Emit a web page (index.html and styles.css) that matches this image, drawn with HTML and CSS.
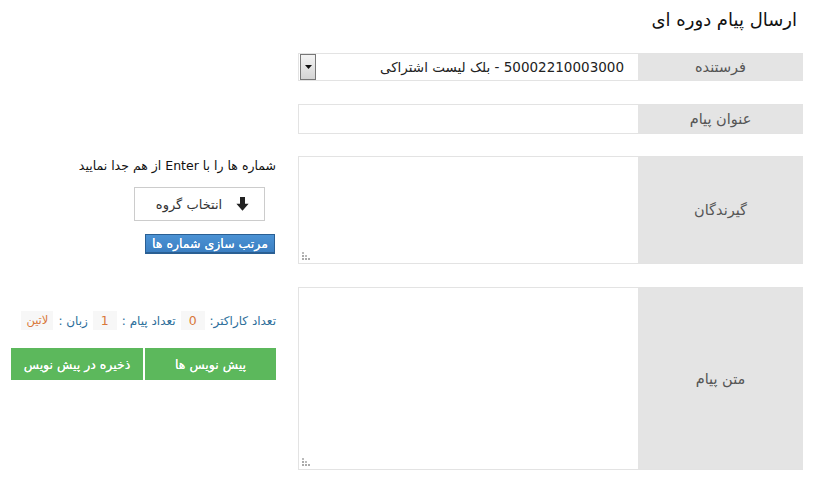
FILE: index.html
```html
<!DOCTYPE html>
<html lang="fa" dir="rtl">
<head>
<meta charset="utf-8">
<title>ارسال پیام دوره ای</title>
<link rel="stylesheet" href="styles.css">
</head>
<body>
<h1 class="title">ارسال پیام دوره ای</h1>
<div class="grid">
  <div class="field f-sender">
    <div class="label">فرستنده</div>
    <div class="control select-wrap">
      <div class="select-value">50002210003000 - بلک لیست اشتراکی</div>
      <span class="select-arrow"><svg width="7" height="4" viewBox="0 0 7 4"><path d="M0 0h7L3.5 4z" fill="#111"/></svg></span>
    </div>
  </div>
  <div class="side"></div>

  <div class="field f-subject">
    <div class="label">عنوان پیام</div>
    <input class="control input" type="text">
  </div>
  <div class="side"></div>

  <div class="field f-recv grip">
    <div class="label">گیرندگان</div>
    <textarea class="control area"></textarea>
  </div>
  <div class="side side-recv">
    <div class="hint">شماره ها را با Enter از هم جدا نمایید</div>
    <button class="btn-group" type="button">
      <svg width="13" height="14" viewBox="0 0 13 14"><path d="M4 0h5v6.8h3.6L6.5 13.8 0.4 6.8h3.6z" fill="#222"/></svg>
      <span>انتخاب گروه</span>
    </button>
    <button class="btn-sort" type="button">مرتب سازی شماره ها</button>
  </div>

  <div class="field f-text grip">
    <div class="label">متن پیام</div>
    <textarea class="control area"></textarea>
  </div>
  <div class="side side-text">
    <div class="counters">
      <span class="c-label">تعداد کاراکتر:</span>
      <span class="c-val">0</span>
      <span class="c-label">تعداد پیام :</span>
      <span class="c-val">1</span>
      <span class="c-label">زبان :</span>
      <span class="c-val c-lang">لاتین</span>
    </div>
    <div class="green-row">
      <button class="btn-green" type="button">پیش نویس ها</button>
      <button class="btn-green" type="button">ذخیره در پیش نویس</button>
    </div>
  </div>
</div>
</body>
</html>
```
FILE: styles.css
```css
* { box-sizing: border-box; }
html, body { margin: 0; padding: 0; background: #fff; }
body {
  width: 815px;
  height: 482px;
  overflow: hidden;
  font-family: "DejaVu Sans", Tahoma, sans-serif;
  font-size: 12px;
  color: #222;
  direction: rtl;
}
.title {
  margin: 0;
  padding: 8px 18px 0 0;
  font-size: 18px;
  font-weight: normal;
  line-height: 24px;
  color: #111;
}
.grid {
  display: grid;
  grid-template-columns: 505px 265px;
  column-gap: 22px;
  padding: 21px 12px 0 0;
}
.field {
  position: relative;
  display: flex;
  border: 1px solid #e3e3e3;
  border-right: none;
}
.f-sender { height: 28px; margin-bottom: 23px; }
.f-subject { height: 30px; margin-bottom: 22px; }
.f-recv { height: 108px; margin-bottom: 23px; }
.f-text { height: 183px; }
.label {
  width: 165px;
  flex: none;
  background: #e4e4e4;
  color: #555;
  font-size: 14.5px;
  display: flex;
  align-items: center;
  justify-content: center;
}
.control {
  flex: 1;
  border: none;
  outline: none;
  margin: 0;
  background: #fff;
  font-family: inherit;
}
.select-wrap {
  position: relative;
  display: flex;
  align-items: center;
  padding-right: 14px;
}
.select-value {
  font-size: 13.5px;
  color: #222;
  white-space: nowrap;
}
.select-arrow {
  position: absolute;
  left: 1px;
  top: 0;
  width: 16px;
  height: 26px;
  border: 1px solid #777;
  background: linear-gradient(#f4f4f4, #d4d4d4);
  display: flex;
  align-items: center;
  justify-content: center;
}
.area {
  resize: none;
  padding: 4px;
  font-size: 13px;
}
.grip::after {
  content: "";
  position: absolute;
  left: 3px;
  bottom: 3px;
  width: 8px;
  height: 8px;
  background:
    radial-gradient(circle at 1px 7px, #aaa 0.8px, transparent 1.2px),
    radial-gradient(circle at 1px 4px, #aaa 0.8px, transparent 1.2px),
    radial-gradient(circle at 1px 1px, #bbb 0.8px, transparent 1.2px),
    radial-gradient(circle at 4px 7px, #aaa 0.8px, transparent 1.2px),
    radial-gradient(circle at 4px 4px, #bbb 0.8px, transparent 1.2px),
    radial-gradient(circle at 7px 7px, #aaa 0.8px, transparent 1.2px);
}
.side-recv {
  display: flex;
  flex-direction: column;
  align-items: flex-start;
}
.hint {
  font-size: 12.5px;
  line-height: 18px;
  padding-top: 1px;
  color: #111;
}
.btn-group {
  margin: 12px 11px 0 0;
  width: 131px;
  height: 34px;
  border: 1px solid #ccc;
  background: #fff;
  font-family: inherit;
  font-size: 13px;
  color: #333;
  display: flex;
  align-items: center;
  justify-content: center;
  gap: 14px;
  padding: 0 0 0 6px;
}
.btn-sort {
  margin: 13px 1px 0 0;
  width: 130px;
  height: 20px;
  border: 1px solid #2a5f93;
  border-width: 1px 1px 2px 1px;
  background: linear-gradient(#4b92d4, #3b7fc2);
  color: #fff;
  font-family: inherit;
  font-size: 12.5px;
  font-weight: normal;
  text-shadow: 0 0 0.4px #fff;
  padding: 0;
  white-space: nowrap;
}
.counters {
  margin-top: 24px;
  display: flex;
  align-items: center;
  height: 19px;
  gap: 5px;
}
.c-label { color: #2d6e9a; font-size: 12px; }
.c-val {
  background: #f7f7f7;
  color: #d9773a;
  font-size: 12.5px;
  height: 19px;
  line-height: 19px;
  padding: 0 8px;
}
.c-lang { font-size: 11.5px; padding: 0 5px; }
.green-row {
  margin-top: 18px;
  display: flex;
  gap: 2px;
}
.btn-green {
  height: 32px;
  width: 131px;
  border: none;
  background: #5cb85c;
  color: #fff;
  font-family: inherit;
  font-size: 12.5px;
  font-weight: normal;
  text-shadow: 0 0 0.5px #fff;
  padding: 0;
}
.btn-green + .btn-green { width: 132px; }
```
